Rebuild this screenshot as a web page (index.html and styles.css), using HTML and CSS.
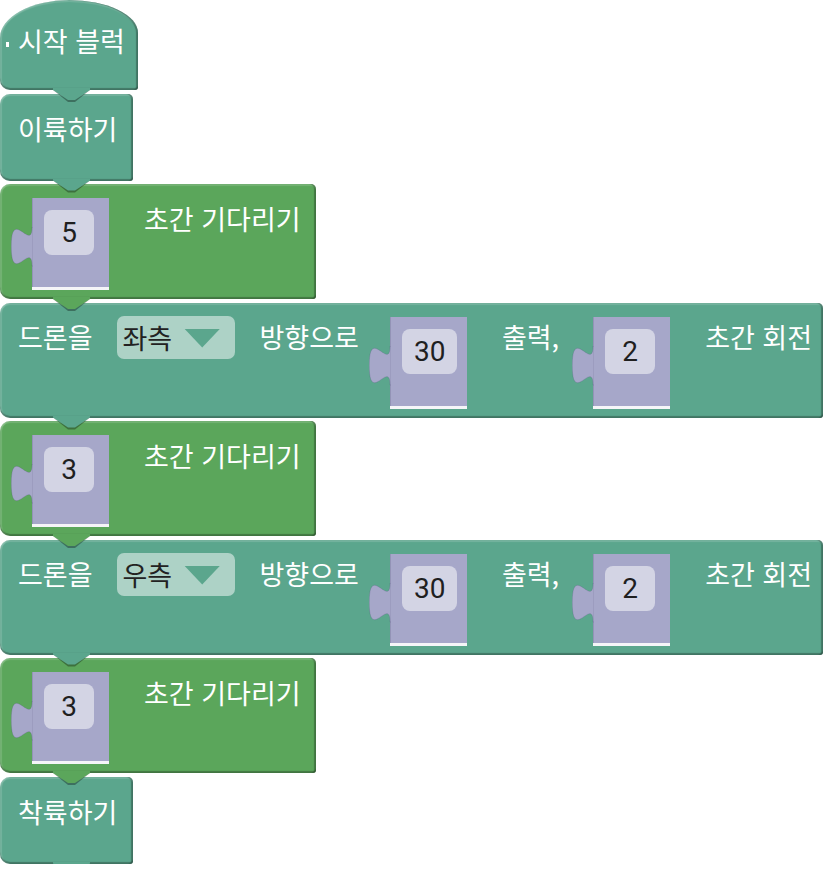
FILE: index.html
```html
<!DOCTYPE html>
<html lang="ko">
<head>
<meta charset="utf-8">
<title>Blocks</title>
<link rel="stylesheet" href="styles.css">
</head>
<body>
<div class="workspace">
  <div class="block hat teal">
    <span class="cursor"></span>
    <span class="label">시작 블럭</span>
  </div>
  <div class="block simple teal"><span class="label">이륙하기</span></div>
  <div class="block wait green">
    <div class="value">
      <svg class="tab" viewBox="0 0 22 40" width="22" height="40"><path d="M22 0 L21 0 c0 26 -20.8 -20.8 -20.8 19.5 s20.8 -6.5 20.8 19.5 L22 39 Z"/></svg>
      <span class="field">5</span>
    </div>
    <span class="label">초간 기다리기</span>
  </div>
  <div class="block turn teal">
    <span class="label">드론을</span>
    <span class="dropdown"><span class="dd-text">좌측</span><span class="dd-arrow"></span></span>
    <span class="label">방향으로</span>
    <div class="value">
      <svg class="tab" viewBox="0 0 22 40" width="22" height="40"><path d="M22 0 L21 0 c0 26 -20.8 -20.8 -20.8 19.5 s20.8 -6.5 20.8 19.5 L22 39 Z"/></svg>
      <span class="field">30</span>
    </div>
    <span class="label">출력,</span>
    <div class="value">
      <svg class="tab" viewBox="0 0 22 40" width="22" height="40"><path d="M22 0 L21 0 c0 26 -20.8 -20.8 -20.8 19.5 s20.8 -6.5 20.8 19.5 L22 39 Z"/></svg>
      <span class="field">2</span>
    </div>
    <span class="label">초간 회전</span>
  </div>
  <div class="block wait green">
    <div class="value">
      <svg class="tab" viewBox="0 0 22 40" width="22" height="40"><path d="M22 0 L21 0 c0 26 -20.8 -20.8 -20.8 19.5 s20.8 -6.5 20.8 19.5 L22 39 Z"/></svg>
      <span class="field">3</span>
    </div>
    <span class="label">초간 기다리기</span>
  </div>
  <div class="block turn teal">
    <span class="label">드론을</span>
    <span class="dropdown"><span class="dd-text">우측</span><span class="dd-arrow"></span></span>
    <span class="label">방향으로</span>
    <div class="value">
      <svg class="tab" viewBox="0 0 22 40" width="22" height="40"><path d="M22 0 L21 0 c0 26 -20.8 -20.8 -20.8 19.5 s20.8 -6.5 20.8 19.5 L22 39 Z"/></svg>
      <span class="field">30</span>
    </div>
    <span class="label">출력,</span>
    <div class="value">
      <svg class="tab" viewBox="0 0 22 40" width="22" height="40"><path d="M22 0 L21 0 c0 26 -20.8 -20.8 -20.8 19.5 s20.8 -6.5 20.8 19.5 L22 39 Z"/></svg>
      <span class="field">2</span>
    </div>
    <span class="label">초간 회전</span>
  </div>
  <div class="block wait green">
    <div class="value">
      <svg class="tab" viewBox="0 0 22 40" width="22" height="40"><path d="M22 0 L21 0 c0 26 -20.8 -20.8 -20.8 19.5 s20.8 -6.5 20.8 19.5 L22 39 Z"/></svg>
      <span class="field">3</span>
    </div>
    <span class="label">초간 기다리기</span>
  </div>
  <div class="block simple teal land"><span class="label">착륙하기</span></div>
</div>
</body>
</html>
```

FILE: styles.css
```css
html, body {
  margin: 0;
  padding: 0;
  background: #ffffff;
}

.workspace {
  display: flex;
  flex-direction: column;
  align-items: flex-start;
  gap: 3.5px;
}

.block {
  position: relative;
  display: flex;
  align-items: flex-start;
  box-sizing: border-box;
  border-radius: 10px 5px 3px 10px;
  color: #ffffff;
  font-family: "Noto Sans CJK KR", "Noto Sans", sans-serif;
  font-size: 27px;
  box-shadow:
    inset 0 -2px 1px rgba(0, 0, 0, 0.28),
    inset -2px 0 1px rgba(0, 0, 0, 0.28),
    inset 0 2px 1px rgba(255, 255, 255, 0.16),
    inset 2px 0 1px rgba(255, 255, 255, 0.16);
}

.teal { background-color: #5ba68d; }
.green { background-color: #5ba65b; }

/* notch hanging under each block */
.block::before,
.block::after {
  content: "";
  position: absolute;
  left: 53px;
  width: 37px;
  z-index: 2;
}
.block::before {
  bottom: -12px;
  height: 12px;
  background: rgba(0, 0, 0, 0.32);
  clip-path: polygon(0 0, 37px 0, 22px 12px, 15px 12px);
}
.block::after {
  bottom: -10px;
  height: 12px;
  background: inherit;
  clip-path: polygon(0 0, 37px 0, 37px 2px, 22px 12px, 15px 12px, 0 2px);
}

.label {
  display: block;
  line-height: 27px;
  margin-top: 20.5px;
  white-space: nowrap;
}

/* start (hat) block */
.hat {
  width: 138px;
  height: 90px;
  padding-left: 18px;
  border-radius: 69px 69px 3px 10px / 38px 33px 3px 10px;
}
.hat .label {
  margin-top: 27px;
}
.cursor {
  position: absolute;
  left: 6px;
  top: 42px;
  width: 3px;
  height: 5px;
  background: #ffffff;
}

.simple {
  width: 133px;
  height: 87px;
  padding-left: 18px;
}
.simple .label {
  margin-top: 21.5px;
}

.wait {
  width: 316px;
  height: 115px;
  padding-left: 32px;
}

.turn {
  width: 823px;
  height: 115px;
  padding-left: 18px;
}

/* value (shadow) input */
.value {
  position: relative;
  box-sizing: border-box;
  width: 77px;
  height: 92px;
  margin-top: 14px;
  padding: 12px 0 0 12px;
  background: #a6a7c9;
  border-bottom: 3px solid #f5f5f8;
  box-shadow: inset 1px 0 0 rgba(60, 60, 100, 0.18);
}
.tab {
  position: absolute;
  left: -21px;
  top: 29px;
  fill: #a6a7c9;
  stroke: rgba(60, 60, 100, 0.18);
  stroke-width: 1;
}
.field {
  display: inline-flex;
  align-items: center;
  justify-content: center;
  box-sizing: border-box;
  min-width: 50px;
  height: 45px;
  padding: 0 12px;
  border-radius: 8px;
  background: #d3d4e4;
  color: #1f1f1f;
  font-family: Roboto, "Liberation Sans", sans-serif;
  font-size: 28px;
}

/* dropdown field */
.dropdown {
  display: flex;
  align-items: center;
  box-sizing: border-box;
  height: 43px;
  width: 118px;
  margin-top: 13px;
  padding-left: 6px;
  border-radius: 7px;
  background: #add2c6;
  color: #222222;
}
.dd-text {
  line-height: 27px;
}
.dd-arrow {
  width: 36px;
  height: 19px;
  margin-left: 12px;
  margin-top: 2px;
  background: #5ba68d;
  clip-path: polygon(0 0, 100% 0, 50% 100%);
}

/* spacing between inline fields */
.label + .dropdown { margin-left: 24px; }
.dropdown + .label { margin-left: 25px; }
.label + .value { margin-left: 31px; }
.value + .label { margin-left: 35px; }
.value + .label + .value { margin-left: 34px; }
```
